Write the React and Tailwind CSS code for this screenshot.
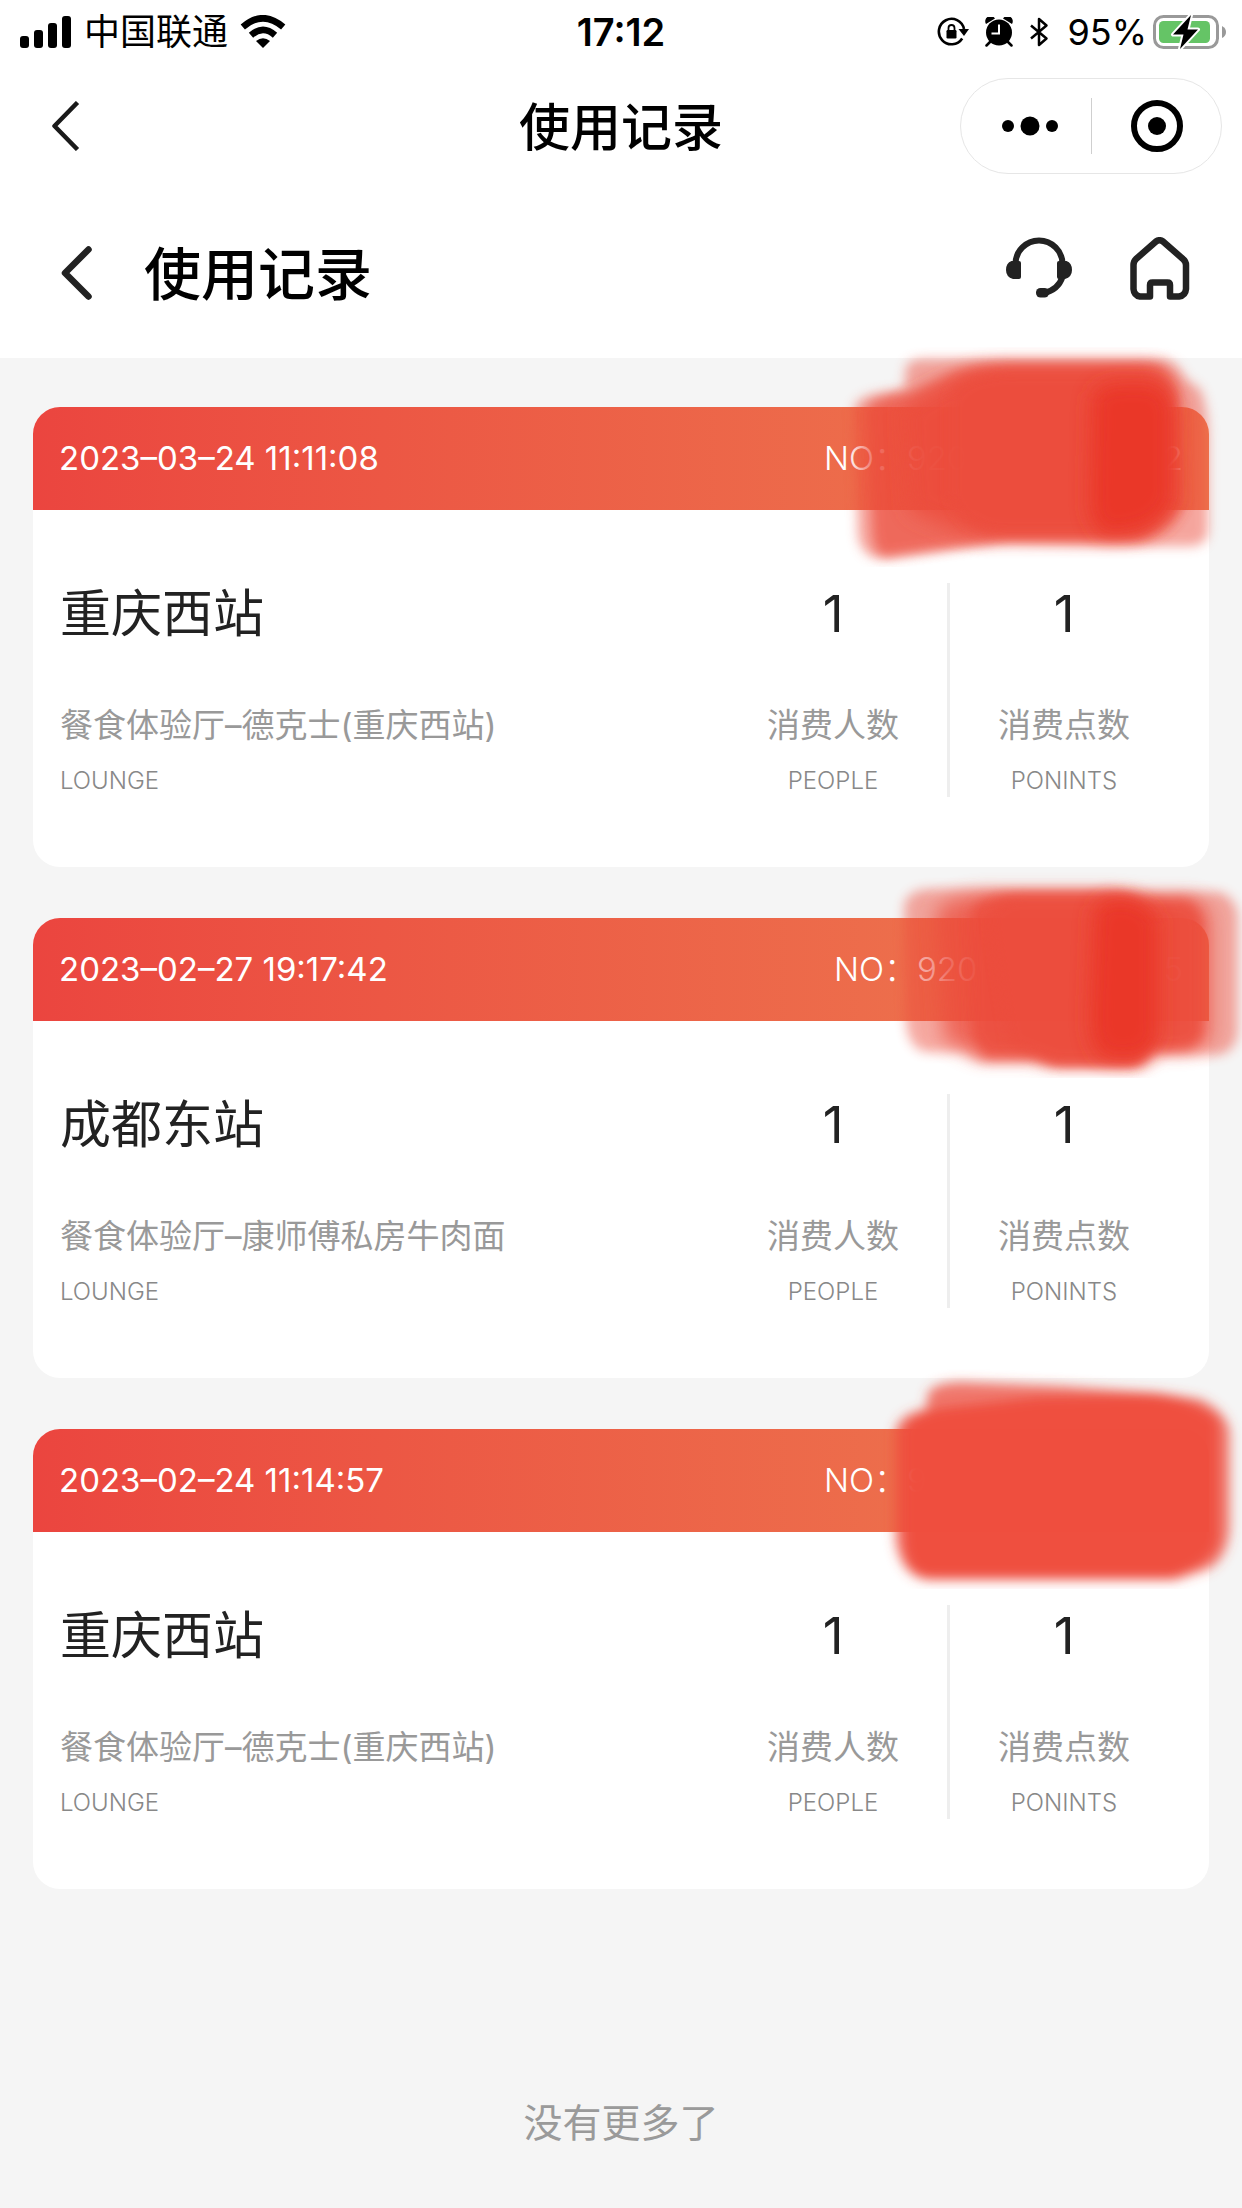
const records = [
  {
    date: "2023–03–24 11:11:08",
    station: "重庆西站",
    lounge: "餐食体验厅–德克士(重庆西站)",
    people: 1,
    points: 1,
    noStart: "920",
    noEnd: "2",
    noWidth: "w-[276px]",
    Cover: CoverOne,
  },
  {
    date: "2023–02–27 19:17:42",
    station: "成都东站",
    lounge: "餐食体验厅–康师傅私房牛肉面",
    people: 1,
    points: 1,
    noStart: "920",
    noEnd: "5",
    noWidth: "w-[266px]",
    Cover: CoverTwo,
  },
  {
    date: "2023–02–24 11:14:57",
    station: "重庆西站",
    lounge: "餐食体验厅–德克士(重庆西站)",
    people: 1,
    points: 1,
    noStart: "9",
    noEnd: "",
    noWidth: "w-[276px]",
    Cover: CoverThree,
  },
];

export default function App() {
  return (
    <div className="min-h-screen bg-[#f5f5f5] font-['Inter','Noto_Sans_CJK_SC',sans-serif] text-black">
      <header className="bg-white">
        <StatusBar />
        <NavBar />
        <PageHeader />
      </header>
      <main className="flex flex-col gap-[51px] px-[33px] pt-[49px]">
        {records.map((record) => (
          <RecordCard key={record.date} record={record} />
        ))}
      </main>
      <p className="mt-[204px] pb-14 text-center text-[39px] leading-[60px] text-[#9a9a9a]">
        没有更多了
      </p>
    </div>
  );
}

function StatusBar() {
  return (
    <div className="grid h-16 grid-cols-[1fr_auto_1fr] items-center px-4 text-4xl">
      <div className="flex items-center pl-1">
        <IconSignal />
        <span className="mx-3">中国联通</span>
        <IconWifi />
      </div>
      <span className="text-[38px] font-semibold">17:12</span>
      <div className="flex items-center justify-end">
        <IconRotationLock />
        <IconAlarm />
        <IconBluetooth />
        <span className="mr-1.5 ml-4.5">95%</span>
        <IconBattery />
      </div>
    </div>
  );
}

function NavBar() {
  return (
    <div className="grid h-31 grid-cols-[1fr_auto_1fr] items-center px-5">
      <button aria-label="返回" className="ml-8 justify-self-start">
        <svg width="28" height="50" viewBox="0 0 28 50" fill="none">
          <path d="M25.500 1.500 2.500 25l23 23.500" stroke="#1a1a1a" strokeWidth="4.500" strokeLinejoin="round" />
        </svg>
      </button>
      <h1 className="pt-1 text-[51px] font-medium">使用记录</h1>
      <div className="flex h-24 w-[262px] items-center justify-self-end rounded-full border border-[#e6e6e6]">
        <button aria-label="更多" className="flex h-full w-[130px] items-center justify-center pl-2">
          <svg width="56" height="20" viewBox="0 0 56 20">
            <circle cx="6" cy="10" r="6" />
            <circle cx="28" cy="10" r="9.5" />
            <circle cx="50" cy="10" r="6" />
          </svg>
        </button>
        <span className="h-14 w-px bg-[#cfcfcf]" />
        <button aria-label="关闭" className="flex h-full flex-1 items-center justify-center">
          <svg width="52" height="52" viewBox="0 0 52 52">
            <circle cx="26" cy="26" r="23" fill="none" stroke="#000" strokeWidth="6" />
            <circle cx="26" cy="26" r="9" />
          </svg>
        </button>
      </div>
    </div>
  );
}

function PageHeader() {
  return (
    <div className="flex h-[170px] items-center pr-[52px] pl-[61px]">
      <button aria-label="返回上一页">
        <svg width="31" height="54" viewBox="0 0 31 54" fill="none">
          <path
            d="M27.500 3.500 4 27l23.500 23.500"
            stroke="#222"
            strokeWidth="6.500"
            strokeLinecap="round"
            strokeLinejoin="round"
          />
        </svg>
      </button>
      <h2 className="ml-[52px] pt-1 text-[57px] font-medium">使用记录</h2>
      <div className="mb-2.5 ml-auto flex items-center gap-[58px]">
        <button aria-label="客服">
          <IconHeadset />
        </button>
        <button aria-label="首页">
          <IconHome />
        </button>
      </div>
    </div>
  );
}

function RecordCard({ record }) {
  const { Cover } = record;

  return (
    <article className="relative rounded-[27px] bg-white">
      <div className="flex h-[103px] items-center justify-between rounded-t-[27px] bg-linear-to-r from-[#eb453f] to-[#ed7a50] px-[26px] text-[33px] font-light text-white">
        <time className="font-normal">{record.date}</time>
        <div className="flex">
          NO：
          <span className={`flex justify-between ${record.noWidth}`}>
            <span>{record.noStart}</span>
            <span>{record.noEnd}</span>
          </span>
        </div>
      </div>
      <div className="flex pt-[73px] pr-[31px] pb-[70px] pl-[27px]">
        <div className="flex-1">
          <h3 className="text-[51px] leading-[62px] text-[#222]">{record.station}</h3>
          <p className="mt-14 text-[33px] leading-[48px] text-[#999]">{record.lounge}</p>
          <p className="mt-4 text-2xl leading-8 font-light text-[#888]">LOUNGE</p>
        </div>
        <Stat value={record.people} label="消费人数" sub="PEOPLE" />
        <div className="w-[3px] bg-[#eee]" />
        <Stat value={record.points} label="消费点数" sub="PONINTS" />
      </div>
      <Cover />
    </article>
  );
}

function Stat({ value, label, sub }) {
  return (
    <div className="w-[228px] text-center">
      <p className="text-[51px] leading-[62px] text-[#222]">{value}</p>
      <p className="mt-14 text-[33px] leading-[48px] text-[#999]">{label}</p>
      <p className="mt-4 text-2xl leading-8 font-light text-[#888]">{sub}</p>
    </div>
  );
}

/* Brush marks over the record numbers */

function CoverOne() {
  return (
    <svg className="absolute -top-[60px] -right-[33px]" width="422" height="220" viewBox="0 0 422 220">
      <filter id="soft1" x="-20%" y="-20%" width="140%" height="140%">
        <feGaussianBlur stdDeviation="6" />
      </filter>
      <filter id="softer1" x="-40%" y="-40%" width="180%" height="180%">
        <feGaussianBlur stdDeviation="10" />
      </filter>
      <g fill="#ec4d3d">
        <path filter="url(#soft1)" opacity=".5" d="M86 20Q90 12 104 12H340Q356 12 366 32L380 42Q388 60 388 90V185Q386 198 372 199H290L180 196 70 210Q44 216 38 190L34 60Q40 48 62 46L84 42Z" />
        <path filter="url(#soft1)" opacity=".68" d="M48 60Q58 48 90 46L132 26Q150 18 190 18H335Q350 22 358 46L362 160Q352 184 320 192H190L66 210Q52 208 52 176Z" />
        <path filter="url(#softer1)" opacity=".85" d="M84 60Q120 38 142 28 160 20 190 20H330Q348 26 354 50L356 150Q348 178 316 190H170Q142 188 124 178L90 164Z" />
        <path filter="url(#soft1)" opacity=".8" d="M130 50Q140 26 190 24H320Q344 28 348 60V150Q338 180 316 187H180Q140 182 130 150Z" />
        <path filter="url(#softer1)" fill="#ea3525" opacity=".9" d="M272 50Q278 38 296 36H334Q350 44 352 62V152Q346 174 316 184L284 188Q270 178 270 152Z" />
      </g>
    </svg>
  );
}

function CoverTwo() {
  return (
    <svg className="absolute -top-[60px] -right-[33px]" width="422" height="220" viewBox="0 0 422 220">
      <filter id="soft2" x="-20%" y="-20%" width="140%" height="140%">
        <feGaussianBlur stdDeviation="6" />
      </filter>
      <filter id="softer2" x="-40%" y="-40%" width="180%" height="180%">
        <feGaussianBlur stdDeviation="10" />
      </filter>
      <g fill="#ec4d3d">
        <path filter="url(#soft2)" opacity=".48" d="M84 46Q90 31 110 31H290L326 34 400 34Q416 40 418 58V176Q414 196 396 197H334L322 208H230L212 204H160L142 194H106Q88 190 86 164Z" />
        <path filter="url(#softer2)" opacity=".72" d="M116 52Q130 38 165 36H290L326 40H374Q388 46 390 66V176Q386 190 366 192H334L318 206H232L212 199H162L124 182Z" />
        <path filter="url(#soft2)" opacity=".8" d="M150 56Q156 40 184 37H300L330 42H366Q380 50 382 66V176Q376 190 360 191H332L316 206H236L214 199H166L152 178Z" />
        <path filter="url(#soft2)" opacity=".6" d="M170 60Q174 40 200 38H310L335 56V180L314 205H236L190 188Z" />
        <path filter="url(#softer2)" fill="#ea3525" opacity=".9" d="M274 54Q278 42 296 40 326 40 338 62V178Q334 198 312 202L282 200Q270 188 270 160Z" />
      </g>
    </svg>
  );
}

function CoverThree() {
  return (
    <svg className="absolute -top-[60px] -right-[33px]" width="422" height="220" viewBox="0 0 422 220">
      <filter id="soft3" x="-20%" y="-20%" width="140%" height="140%">
        <feGaussianBlur stdDeviation="6" />
      </filter>
      <g filter="url(#soft3)" fill="#ee4d3e">
        <path opacity=".75" d="M108 24Q114 14 140 13L240 17 340 24 380 30Q406 42 410 62V160Q407 196 380 203L355 211H110Q80 209 75 170V62Q80 44 106 40Z" />
        <path opacity=".97" d="M84 62Q90 44 124 39L220 28 330 25Q378 30 398 52V172Q392 196 350 209H108Q86 205 84 172Z" />
      </g>
    </svg>
  );
}

/* Icons */

function IconSignal() {
  return (
    <svg width="52" height="32" viewBox="0 0 52 32">
      <rect x="0" y="20" width="9" height="12" rx="3" />
      <rect x="14" y="14" width="9" height="18" rx="3" />
      <rect x="28" y="7" width="9" height="25" rx="3" />
      <rect x="42" y="0" width="9" height="32" rx="3" />
    </svg>
  );
}

function IconWifi() {
  return (
    <svg width="46" height="34" viewBox="0 0 46 34">
      <path d="M2.800 12Q23-5.500 43.200 12" fill="none" stroke="#000" strokeWidth="6.500" />
      <path d="M11 20.200Q23 9.500 35 20.200" fill="none" stroke="#000" strokeWidth="6.500" />
      <path d="M16 26Q23 20.500 30 26L23 33Z" />
    </svg>
  );
}

function IconRotationLock() {
  return (
    <svg className="mr-4" width="32" height="30" viewBox="0 0 32 30">
      <path d="M25.200 21.500A12.700 12.700 0 1 1 27 12" fill="none" stroke="#000" strokeWidth="2.600" />
      <path d="M21.500 12H32L27 19Z" />
      <rect x="9.500" y="13" width="10" height="8.500" rx="1.200" />
      <path d="M11.500 14v-3a3 3 0 0 1 6 0v3" fill="none" stroke="#000" strokeWidth="1.800" />
    </svg>
  );
}

function IconAlarm() {
  return (
    <svg className="mr-4" width="28" height="30" viewBox="0 0 28 30">
      <circle cx="14" cy="15.500" r="13" />
      <path d="M1 7A5 5 0 0 1 10 1.500ZM18 1.500A5 5 0 0 1 27 7Z" />
      <path d="m5 25-3.500 3.500M23 25l3.500 3.500" stroke="#000" strokeWidth="2.500" strokeLinecap="round" />
      <path d="M14 7.500V16.500H6.500" fill="none" stroke="#fff" strokeWidth="2" />
    </svg>
  );
}

function IconBluetooth() {
  return (
    <svg width="20" height="30" viewBox="0 0 20 30" fill="none" stroke="#000" strokeWidth="2.500" strokeLinejoin="round">
      <path d="M2 8.500 17.500 21.500 10 28V2L17.500 8.500 2 21.500" />
    </svg>
  );
}

function IconBattery() {
  return (
    <svg width="73" height="36" viewBox="0 0 73 36">
      <rect x="1.500" y="2.500" width="63" height="31" rx="9" fill="none" stroke="#999" strokeWidth="3" />
      <rect x="6" y="7" width="51" height="22" rx="4.500" fill="#65c466" />
      <path d="M69 12Q73 14 73 18T69 24Z" fill="#999" />
      <path
        d="M38 1 20 20.500H30.500L27 35 45 15.500H34.500Z"
        stroke="#fff"
        strokeWidth="4"
        strokeLinejoin="round"
        paintOrder="stroke"
      />
    </svg>
  );
}

function IconHeadset() {
  return (
    <svg width="66" height="62" viewBox="0 0 66 62" fill="#222">
      <path d="M9.500 27A23.500 23.500 0 0 1 56.500 27" fill="none" stroke="#222" strokeWidth="6" />
      <path d="M5.500 24H13Q15 24 15 26V40Q15 42 13 42H7Q0 40 0 33 0 26 5.500 24ZM60.500 24H53Q51 24 51 26V40Q51 42 53 42H59Q66 40 66 33 66 26 60.500 24Z" />
      <path d="M56.500 40Q52 53 38 56" fill="none" stroke="#222" strokeWidth="6" />
      <rect x="30" y="51" width="13" height="9.500" rx="4.500" />
    </svg>
  );
}

function IconHome() {
  return (
    <svg width="60" height="63" viewBox="0 0 60 63" fill="none">
      <path
        d="M26 4.500Q29.500 2 33 4.500L53 22Q56 24.500 56 28V52Q55.500 58.500 49 59.500H40V48Q40 45.500 37.500 45.500H22.500Q20 45.500 20 48V59.500H10Q4 58.500 3.500 52V28Q3.500 24.500 6 22Z"
        stroke="#222"
        strokeWidth="6.500"
        strokeLinejoin="round"
      />
    </svg>
  );
}
